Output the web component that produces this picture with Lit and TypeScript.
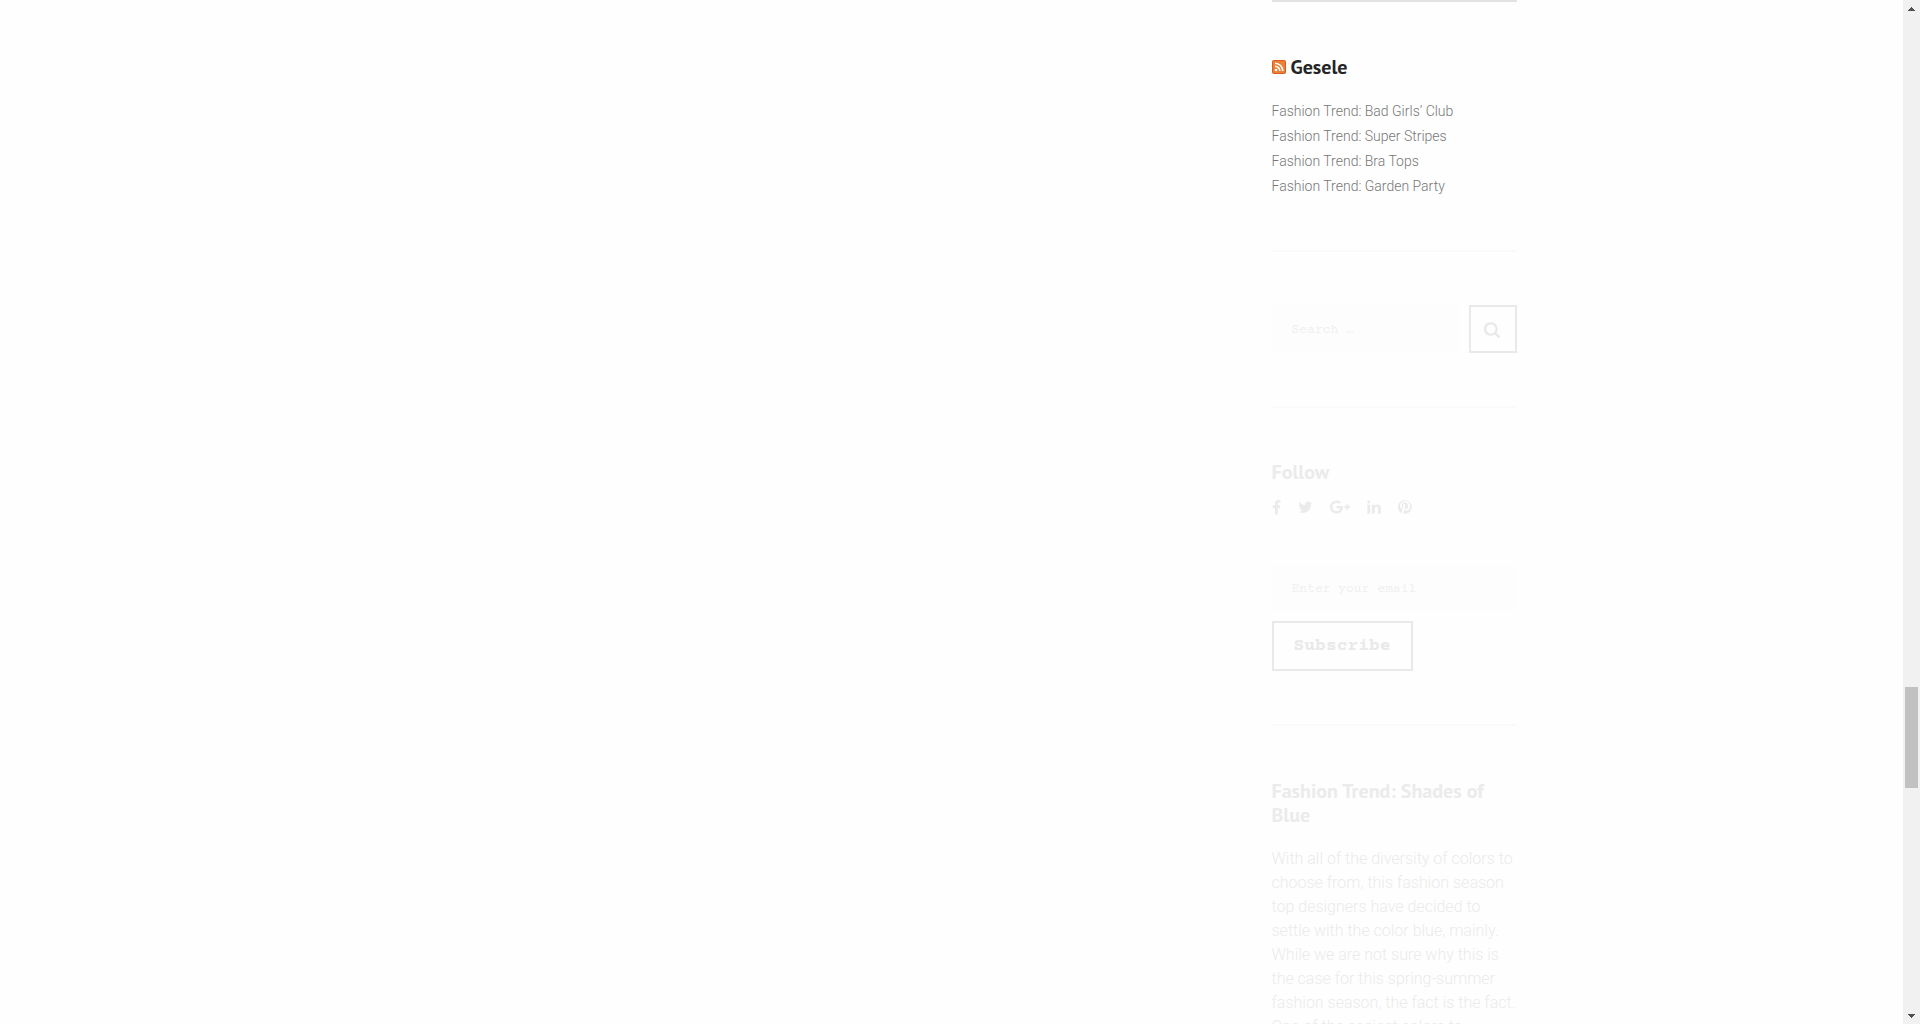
import { LitElement, html, css, svg } from "lit";
import { customElement } from "lit/decorators.js";

const feed = [
  "Fashion Trend: Bad Girls’ Club",
  "Fashion Trend: Super Stripes",
  "Fashion Trend: Bra Tops",
  "Fashion Trend: Garden Party",
];

const icon = (w: number, viewBox: string, d: string) =>
  html`<svg class="icon" width=${w} height="16" viewBox=${viewBox} aria-hidden="true">${svg`<path d=${d} />`}</svg>`;

const social = [
  { name: "Facebook", w: 9, box: "0 0 9 16", d: "M8.5 1.1v2.4H7.1C6 3.500 5.800 4 5.800 4.800v1.500h2.600L8 9H5.800v6.600H3V9H.7V6.300H3V4.400C3 2.100 4.400.9 6.400.9c1 0 1.800.1 2.100.2z" },
  { name: "Twitter", w: 15, box: "0 0 15 16", d: "M14.300 3.900c-.4.600-.9 1.100-1.400 1.500v.4c0 3.700-2.800 8.100-8.100 8.100-1.600 0-3.100-.5-4.400-1.300 1.500.2 3-.3 4.200-1.200-1.200 0-2.300-.8-2.600-2 .4.100.8.100 1.200 0C1.800 9.100.9 8 .9 6.600c.4.200.8.300 1.300.4C.9 6.100.5 4.500 1.300 3.100c1.500 1.800 3.600 2.900 5.900 3-.4-1.900 1-3.500 2.800-3.500.8 0 1.600.3 2.100.9.700-.1 1.300-.4 1.800-.7-.2.700-.7 1.200-1.300 1.600.6-.1 1.200-.2 1.700-.5z" },
  { name: "Google Plus", w: 20, box: "0.5 0 20 16", d: "M7 7h6.200c.1.400.1.700.1 1.200 0 3.800-2.500 6.400-6.300 6.400A6.600 6.600 0 0 1 7 1.400c1.800 0 3.300.6 4.400 1.700L9.600 4.900C9.100 4.400 8.200 3.900 7 3.900a4.100 4.100 0 0 0 0 8.200c2.600 0 3.500-1.900 3.700-2.800H7zM16.800 5.200h1.900v1.900h1.900V9h-1.900v1.900h-1.900V9h-1.900V7.100h1.900z" },
  { name: "LinkedIn", w: 14, box: "0 0 14 16", d: "M.3 5.700h2.900v9H.3zM1.800 1.500c1 0 1.600.6 1.600 1.500S2.800 4.400 1.700 4.400C.8 4.400.2 3.800.2 3S.8 1.500 1.800 1.500zM4.900 5.700h2.900V7c.4-.6 1.100-1.500 2.700-1.500 2 0 3.400 1.300 3.400 4v5.200H11V9.900c0-1.200-.4-2.100-1.500-2.100-1.300 0-1.700 1.100-1.700 1.900v5H4.900z" },
  { name: "Pinterest", w: 14, box: "0 0 14 16", d: "M7 1.200a6.800 6.800 0 1 1-2 13.300c.3-.5.700-1.200.8-1.800l.5-1.900c.3.500 1 .9 1.800.9 2.400 0 4.100-2.200 4.100-4.900 0-2.600-2.100-4.500-4.900-4.500C3.900 2.300 2 4.600 2 7c0 1.200.6 2.600 1.600 3 .2.100.3 0 .3-.1l.2-.9v-.3c-.3-.4-.6-1.100-.6-1.700C3.500 5.300 4.800 3.600 7 3.600c1.900 0 3.200 1.300 3.200 3.100 0 2.100-1 3.500-2.400 3.500-.8 0-1.300-.6-1.200-1.400.2-.9.700-1.900.7-2.600 0-1.700-2.400-1.400-2.400.8 0 .7.200 1.100.2 1.100l-1 4.100c-.1.700-.1 1.600 0 2.100A6.800 6.800 0 0 1 7 1.200z" },
];

@customElement("app-root")
export class AppRoot extends LitElement {
  static styles = css`
    :host {
      display: flex;
      height: 100vh;
      overflow: hidden;
      background: #fefefe;
      color: #252525;
      font: 300 16px/24px Roboto, sans-serif;
    }
    * { box-sizing: border-box; }
    h2, p, ul { margin: 0; padding: 0; }
    a { color: inherit; text-decoration: none; }
    .page { flex: 1; min-width: 0; }
    .container {
      display: grid;
      grid-template-columns: 1fr 245px;
      max-width: 1130px;
      margin: 0 auto;
    }
    .widget { padding: 52px 0 53px; border-top: 2px solid #fafafa; }
    .widget.first { border-color: #e2e2e2; padding: 53px 0 51px; }
    .widget.searchbox { padding: 53px 0; }
    .faded { color: #ebebeb; }
    .title { font: 700 20px/24px "PT Sans", "Noto Sans", sans-serif; }
    .rss { display: inline-block; vertical-align: 0; margin-right: 5px; }
    .feed { list-style: none; margin-top: 20px; font-size: 14px; line-height: 25px; color: #777; }
    .search { display: flex; gap: 10px; }
    .field {
      flex: 1;
      width: 100%;
      min-width: 0;
      height: 46px;
      padding: 2px 20px 0;
      border: 0;
      border-radius: 0;
      background: #fdfdfd;
      font: 400 13px/20px "Courier Prime", "Nimbus Mono PS", "Liberation Mono", monospace;
    }
    .search .field { height: 48px; }
    .field::placeholder { color: #f0f0f0; opacity: 1; }
    .button {
      flex: none;
      border: 2px solid #e9e9e9;
      border-radius: 0;
      background: #fefefe;
      color: #e9e9e9;
      padding: 0 20px;
      height: 50px;
      font: 700 18px/24px "Courier Prime", "Nimbus Mono PS", "Liberation Mono", monospace;
    }
    .button.square { width: 48px; height: 48px; padding: 2px 0 0; display: grid; place-items: center; }
    .icon { display: block; fill: currentColor; }
    .social { display: flex; gap: 17px; list-style: none; margin-top: 15px; }
    .subscribe { display: grid; justify-items: start; gap: 10px; margin-top: 50px; }
    .text { margin-top: 20px; color: #ebebeb; }
    .widget.post { padding-top: 53px; }
    .scrollbar {
      width: 17px;
      display: grid;
      grid-template-rows: 17px 670fr 101px 219fr 17px;
      justify-items: center;
      align-items: center;
      background: #f1f1f1;
    }
    .thumb { grid-row: 3; width: 13px; height: 100%; background: #c1c1c1; }
    .up { grid-row: 1; fill: #505050; }
    .down { grid-row: 5; fill: #505050; }
  `;

  render() {
    return html`
      <div class="page">
        <div class="container">
          <main></main>
          <aside>
            <section class="widget first">
              <h2 class="title"><a href="#"><svg class="rss" width="14" height="14" viewBox="0 0 14 14" aria-hidden="true">
                <rect width="14" height="14" rx="2" fill="#dc5a1c" />
                <rect x="1" y="1" width="12" height="12" rx="1" fill="#ea8136" />
                <circle cx="4" cy="10" r="1.300" fill="#fff" />
                <path d="M3 6.200a4.800 4.800 0 0 1 4.800 4.800M3 3.200a7.800 7.800 0 0 1 7.800 7.800" fill="none" stroke="#fff" stroke-width="1.600" />
              </svg></a><a href="#">Gesele</a></h2>
              <ul class="feed">${feed.map((t) => html`<li><a href="#">${t}</a></li>`)}</ul>
            </section>
            <section class="widget searchbox">
              <form class="search">
                <input class="field" type="search" placeholder="Search …" aria-label="Search" />
                <button class="button square" type="button" aria-label="Search">
                  ${icon(17, "0 0 17 16", "M6.900.2a6.700 6.700 0 0 1 5.500 10.500l3.900 3.700-1.800 1.800-3.900-3.800A6.800 6.800 0 1 1 6.900.2zm0 2.300a4.600 4.600 0 1 0 0 9.200 4.600 4.600 0 0 0 0-9.200z")}
                </button>
              </form>
            </section>
            <section class="widget faded">
              <h2 class="title">Follow</h2>
              <ul class="social">
                ${social.map((s) => html`<li><a href="#" aria-label=${s.name}>${icon(s.w, s.box, s.d)}</a></li>`)}
              </ul>
              <form class="subscribe">
                <input class="field" type="email" placeholder="Enter your email" aria-label="Email" />
                <button class="button" type="button">Subscribe</button>
              </form>
            </section>
            <section class="widget faded post">
              <h2 class="title">Fashion Trend: Shades of Blue</h2>
              <p class="text">
                With all of the diversity of colors to choose from, this fashion season top designers have decided to
                settle with the color blue, mainly. While we are not sure why this is the case for this spring-summer
                fashion season, the fact is the fact. One of the easiest colors to
              </p>
            </section>
          </aside>
        </div>
      </div>
      <div class="scrollbar" aria-hidden="true">
        <svg class="up" width="7" height="4" viewBox="0 0 7 4"><path d="M3 0h1v1h1v1h1v1h1v1H0V3h1V2h1V1h1z" /></svg>
        <div class="thumb"></div>
        <svg class="down" width="7" height="4" viewBox="0 0 7 4"><path d="M0 0h7v1H6v1H5v1H4v1H3V3H2V2H1V1H0z" /></svg>
      </div>
    `;
  }
}
